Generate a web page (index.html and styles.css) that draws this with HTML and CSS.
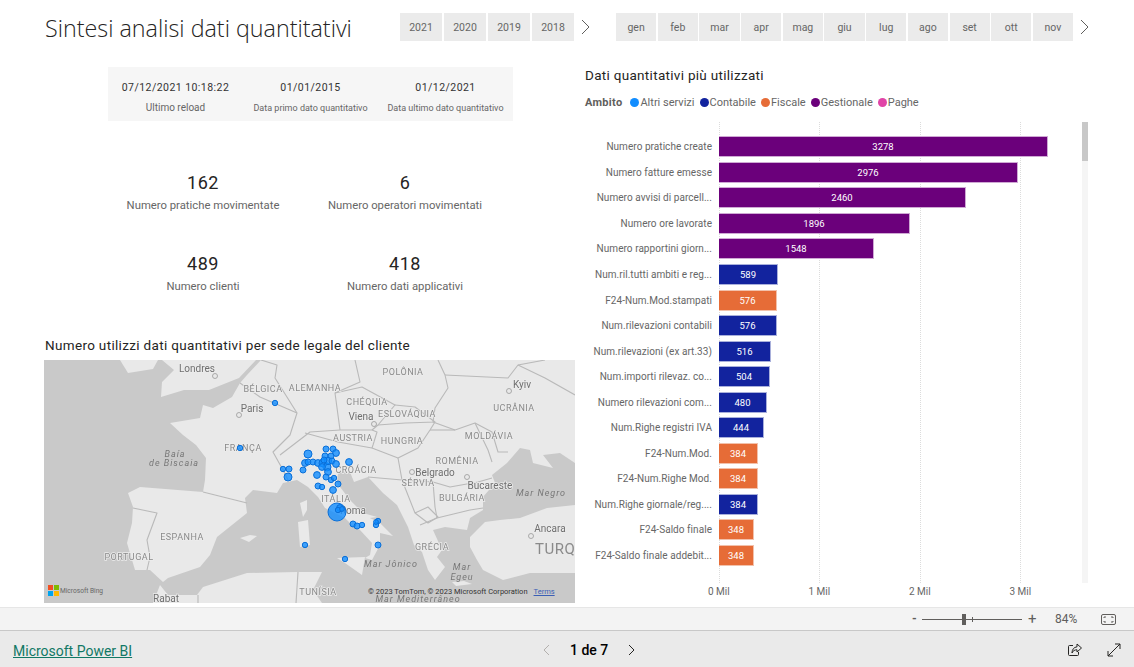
FILE: index.html
```html
<!DOCTYPE html>
<html lang="it">
<head>
<meta charset="utf-8">
<title>Sintesi analisi dati quantitativi</title>
<link rel="stylesheet" href="styles.css">
</head>
<body>
<main class="report">
  <header class="top">
    <h1 class="title">Sintesi analisi dati quantitativi</h1>
    <div class="slicer years">
      <span class="tile">2021</span><span class="tile">2020</span><span class="tile">2019</span><span class="tile">2018</span>
      <svg class="chev" width="9" height="16" viewBox="0 0 9 16"><path d="M1 1l7 7-7 7" /></svg>
    </div>
    <div class="slicer months">
      <span class="tile">gen</span><span class="tile">feb</span><span class="tile">mar</span><span class="tile">apr</span><span class="tile">mag</span><span class="tile">giu</span><span class="tile">lug</span><span class="tile">ago</span><span class="tile">set</span><span class="tile">ott</span><span class="tile">nov</span>
      <svg class="chev" width="9" height="16" viewBox="0 0 9 16"><path d="M1 1l7 7-7 7" /></svg>
    </div>
  </header>
  <div class="body">
    <section class="left">
      <div class="info">
        <div class="info-item"><b>07/12/2021 10:18:22</b><span class="info-big">Ultimo reload</span></div>
        <div class="info-item"><b>01/01/2015</b><span>Data primo dato quantitativo</span></div>
        <div class="info-item"><b>01/12/2021</b><span>Data ultimo dato quantitativo</span></div>
      </div>
      <div class="kpis">
        <div class="kpi"><b>162</b><span>Numero pratiche movimentate</span></div>
        <div class="kpi"><b>6</b><span>Numero operatori movimentati</span></div>
        <div class="kpi"><b>489</b><span>Numero clienti</span></div>
        <div class="kpi"><b>418</b><span>Numero dati applicativi</span></div>
      </div>
      <h2 class="map-title">Numero utilizzi dati quantitativi per sede legale del cliente</h2>
      <div class="map">
        <svg class="map-svg" width="531" height="243" viewBox="0 0 531 243">
          <rect class="sea" width="531" height="243"/>
          <g class="land">
            <path d="M217 0L203 15 196 23 188 37 169 48 159 45 156 58 126 63 139 75 152 85 162 98 161 120 159 132 96 127 84 133 89 147 88 163 83 183 91 210 106 210 119 222 124 218 156 207 166 195 173 177 203 153 201 138 209 130 233 133 239 123 253 120 264 127 274 137 281 148 301 158 308 165 316 170 328 183 326 195 321 198 328 200 336 185 336 173 349 176 336 163 326 158 333 157 319 153 306 140 293 123 294 113 306 112 310 122 324 117 339 133 353 145 364 167 370 185 378 192 384 210 391 220 401 207 393 197 398 190 389 170 401 167 423 170 426 158 439 150 439 137 451 123 448 115 463 103 476 88 486 90 489 103 509 108 499 95 516 93 531 103 531 0Z"/>
            <path d="M531 145L503 148 476 158 456 160 441 162 433 170 426 177 426 187 433 200 439 210 459 220 486 213 509 213 531 213Z"/>
            <path d="M109 243L116 225 124 235 153 235 159 227 203 213 253 212 278 212 269 230 278 243Z"/>
            <path d="M76 0L84 13 109 9 114 0Z"/>
            <path d="M118 0L130 10 118 22 117 37 140 30 165 30 195 18 212 0Z"/>
            <path d="M256 143L263 140 263 150 259 157Z"/>
            <path d="M254 162L264 160 266 185 256 187Z"/>
            <path d="M293 198L321 197 318 215 301 203Z"/>
            <path d="M196 178L206 175 213 176 205 182Z"/>
            <path d="M408 222L420 221 428 224 412 226Z"/>
          </g>
          <g class="borders">
            <path d="M217 0L233 5 231 18 253 53 246 75 229 92 239 110 244 120"/>
            <path d="M196 23L216 37 253 53"/>
            <path d="M236 95L266 72 296 70 328 70 333 72 329 85 328 88 294 82 261 73"/>
            <path d="M311 0L316 22 291 33 296 70"/>
            <path d="M291 33L318 27 351 45 334 65 328 70"/>
            <path d="M351 45L371 47 391 62 361 63 334 65"/>
            <path d="M394 0L401 15 404 28 391 48 389 62 411 70 431 63 448 72 454 92 464 92"/>
            <path d="M401 15L464 18 474 5 501 0"/>
            <path d="M474 5L501 18 531 35"/>
            <path d="M391 62L386 70 374 88 354 98 328 88"/>
            <path d="M354 98L358 120 389 122 406 127 434 122 448 118"/>
            <path d="M386 70L411 70"/>
            <path d="M431 63L444 90 448 102"/>
            <path d="M389 122L391 147 393 158 426 150 439 148"/>
            <path d="M358 120L324 117"/>
            <path d="M358 120L371 153 384 147 394 157 384 163 371 153"/>
            <path d="M376 165L393 158"/>
            <path d="M159 132L203 143"/>
            <path d="M89 148L113 153 103 180 106 197 103 210"/>
            <path d="M154 235L154 243"/>
            <path d="M254 212L252 243"/>
          </g>
          <g class="cities">
            <circle cx="171" cy="16" r="2.5"/><circle cx="195" cy="55" r="2.5"/><circle cx="330" cy="64" r="2.5"/><circle cx="465" cy="31" r="2.5"/><circle cx="368" cy="112" r="2.5"/><circle cx="423" cy="117" r="2.5"/><circle cx="487" cy="176" r="2.5"/>
          </g>
          <g class="labels">
            <text x="153" y="12">Londres</text>
            <text x="208" y="52">Paris</text>
            <text x="317" y="60">Viena</text>
            <text x="478" y="28">Kyiv</text>
            <text x="391" y="116">Belgrado</text>
            <text x="309" y="154">Roma</text>
            <text x="446" y="129">Bucareste</text>
            <text x="506" y="172">Ancara</text>
            <text x="122" y="242">Rabat</text>
          </g>
          <g class="labels country">
            <text x="219" y="32">BÉLGICA</text>
            <text x="271" y="31">ALEMANHA</text>
            <text x="199" y="91">FRANÇA</text>
            <text x="359" y="15">POLÔNIA</text>
            <text x="470" y="51">UCRÂNIA</text>
            <text x="323" y="45">CHÉQUIA</text>
            <text x="363" y="57">ESLOVÁQUIA</text>
            <text x="309" y="81">AUSTRIA</text>
            <text x="358" y="84">HUNGRIA</text>
            <text x="445" y="79">MOLDÁVIA</text>
            <text x="413" y="104">ROMÊNIA</text>
            <text x="312" y="113">CROÁCIA</text>
            <text x="292" y="142">ITÁLIA</text>
            <text x="374" y="126">SÉRVIA</text>
            <text x="418" y="141">BULGÁRIA</text>
            <text x="388" y="190">GRÉCIA</text>
            <text x="274" y="235">TUNÍSIA</text>
            <text x="138" y="180">ESPANHA</text>
            <text x="85" y="200">PORTUGAL</text>
          </g>
          <text class="turkey" x="491" y="194">TURQUIA</text>
          <g class="labels water">
            <text x="131" y="97">Baía</text>
            <text x="130" y="106">de Biscaia</text>
            <text x="497" y="136">Mar Negro</text>
            <text x="347" y="207">Mar Jônico</text>
            <text x="418" y="210">Mar</text>
            <text x="418" y="220">Egeu</text>
            <text x="374" y="242">Mar Mediterrâneo</text>
          </g>
          <g class="dots">
            <circle cx="231" cy="43" r="2.7"/><circle cx="196" cy="88" r="2.7"/>
            <circle cx="239" cy="109" r="2.7"/><circle cx="245" cy="109" r="3"/><circle cx="244" cy="117" r="4"/><circle cx="259" cy="110" r="3"/><circle cx="264" cy="94" r="4"/><circle cx="261" cy="103" r="3.4"/><circle cx="264" cy="102" r="3"/><circle cx="269" cy="102" r="3"/><circle cx="274" cy="103" r="3.4"/><circle cx="279" cy="103" r="4"/><circle cx="283" cy="107" r="4"/><circle cx="278" cy="107" r="3.4"/><circle cx="281" cy="96" r="3"/><circle cx="282" cy="89" r="3"/><circle cx="289" cy="89" r="3"/><circle cx="292" cy="93" r="3.4"/><circle cx="287" cy="96" r="3"/><circle cx="284" cy="101" r="3.7"/><circle cx="288" cy="101" r="3"/><circle cx="280" cy="100" r="3"/><circle cx="292" cy="104" r="3.4"/><circle cx="305" cy="102" r="3.4"/><circle cx="284" cy="112" r="3.4"/><circle cx="273" cy="115" r="3.4"/><circle cx="282" cy="117" r="3"/><circle cx="287" cy="120" r="2.7"/><circle cx="290" cy="118" r="2.7"/><circle cx="294" cy="124" r="3"/><circle cx="274" cy="126" r="3"/><circle cx="278" cy="127" r="2.7"/><circle cx="289" cy="130" r="3.4"/>
            <circle cx="293" cy="152" r="9"/><circle cx="296" cy="148" r="3.4"/><circle cx="294" cy="150" r="2.7"/><circle cx="298" cy="149" r="2.4"/>
            <circle cx="309" cy="164" r="3"/><circle cx="313" cy="166" r="3"/><circle cx="318" cy="165" r="2.7"/><circle cx="334" cy="161" r="2.7"/><circle cx="332" cy="165" r="2.7"/><circle cx="332" cy="162" r="2.4"/><circle cx="334" cy="185" r="3"/><circle cx="301" cy="199" r="2.7"/><circle cx="261" cy="185" r="2.7"/>
          </g>
        </svg>
        <div class="bing">
          <svg class="bing-logo" width="11" height="11" viewBox="0 0 11 11"><rect class="ms-r" width="5" height="5"/><rect class="ms-g" x="6" width="5" height="5"/><rect class="ms-b" y="6" width="5" height="5"/><rect class="ms-y" x="6" y="6" width="5" height="5"/></svg>
          <span>Microsoft Bing</span>
        </div>
        <div class="attrib"><span>© 2023 TomTom, © 2023 Microsoft Corporation</span><a href="#">Terms</a></div>
      </div>
    </section>
    <section class="right">
      <h2 class="chart-title">Dati quantitativi più utilizzati</h2>
      <div class="legend">
        <b>Ambito</b>
        <span class="lg"><i class="dot c-altri"></i>Altri servizi</span>
        <span class="lg"><i class="dot c-cont"></i>Contabile</span>
        <span class="lg"><i class="dot c-fisc"></i>Fiscale</span>
        <span class="lg"><i class="dot c-gest"></i>Gestionale</span>
        <span class="lg"><i class="dot c-paghe"></i>Paghe</span>
      </div>
      <div class="chart">
        <i class="grid g0"></i><i class="grid g1"></i><i class="grid g2"></i><i class="grid g3"></i>
        <i class="scroll-track"></i><i class="scroll-thumb"></i>
        <div class="row"><span class="lab">Numero pratiche create</span><span class="bar c-gest" style="width:329px">3278</span></div>
        <div class="row"><span class="lab">Numero fatture emesse</span><span class="bar c-gest" style="width:299px">2976</span></div>
        <div class="row"><span class="lab">Numero avvisi di parcell...</span><span class="bar c-gest" style="width:247px">2460</span></div>
        <div class="row"><span class="lab">Numero ore lavorate</span><span class="bar c-gest" style="width:191px">1896</span></div>
        <div class="row"><span class="lab">Numero rapportini giorn...</span><span class="bar c-gest" style="width:155px">1548</span></div>
        <div class="row"><span class="lab">Num.ril.tutti ambiti e reg...</span><span class="bar c-cont" style="width:59px">589</span></div>
        <div class="row"><span class="lab">F24-Num.Mod.stampati</span><span class="bar c-fisc" style="width:58px">576</span></div>
        <div class="row"><span class="lab">Num.rilevazioni contabili</span><span class="bar c-cont" style="width:58px">576</span></div>
        <div class="row"><span class="lab">Num.rilevazioni (ex art.33)</span><span class="bar c-cont" style="width:52px">516</span></div>
        <div class="row"><span class="lab">Num.importi rilevaz. co...</span><span class="bar c-cont" style="width:51px">504</span></div>
        <div class="row"><span class="lab">Numero rilevazioni com...</span><span class="bar c-cont" style="width:48px">480</span></div>
        <div class="row"><span class="lab">Num.Righe registri IVA</span><span class="bar c-cont" style="width:45px">444</span></div>
        <div class="row"><span class="lab">F24-Num.Mod.</span><span class="bar c-fisc" style="width:39px">384</span></div>
        <div class="row"><span class="lab">F24-Num.Righe Mod.</span><span class="bar c-fisc" style="width:39px">384</span></div>
        <div class="row"><span class="lab">Num.Righe giornale/reg....</span><span class="bar c-cont" style="width:39px">384</span></div>
        <div class="row"><span class="lab">F24-Saldo finale</span><span class="bar c-fisc" style="width:35px">348</span></div>
        <div class="row"><span class="lab">F24-Saldo finale addebit...</span><span class="bar c-fisc" style="width:35px">348</span></div>
      </div>
      <div class="axis"><span>0 Mil</span><span>1 Mil</span><span>2 Mil</span><span>3 Mil</span></div>
    </section>
  </div>
</main>
<div class="zoombar">
  <span class="z-sign">-</span>
  <div class="slider"><i class="thumb"></i><i class="tick"></i></div>
  <span class="z-plus">+</span>
  <span class="z-pct">84%</span>
  <svg class="fit" width="15" height="11" viewBox="0 0 15 11"><rect x=".5" y=".5" width="14" height="10" rx="1.5"/><path d="M3 4V3h2M10 3h2v1M12 7v1h-2M5 8H3V7"/></svg>
</div>
<footer class="footer">
  <a class="brand" href="#">Microsoft Power BI</a>
  <nav class="pager">
    <svg class="pg off" width="8" height="12" viewBox="0 0 8 12"><path d="M7 1L2 6l5 5"/></svg>
    <span class="pg-text">1 de 7</span>
    <svg class="pg" width="8" height="12" viewBox="0 0 8 12"><path d="M1 1l5 5-5 5"/></svg>
  </nav>
  <div class="actions">
    <svg class="act" width="14" height="14" viewBox="0 0 14 14"><path d="M5 2.500H1.500a1 1 0 0 0-1 1v8a1 1 0 0 0 1 1h8a1 1 0 0 0 1-1V9"/><path d="M9 1l4.500 4L9 9V6.800C6.500 6.800 5 7.800 4 10c0-3.500 1.800-5.800 5-6.200z"/></svg>
    <svg class="act" width="14" height="14" viewBox="0 0 14 14"><path d="M1 13L13 1M8 1h5v5M1 8v5h5"/></svg>
  </div>
</footer>
</body>
</html>
```

FILE: styles.css
```css
* { box-sizing: border-box; }
html, body { margin: 0; padding: 0; }
body {
  width: 1134px;
  height: 667px;
  overflow: hidden;
  display: flex;
  flex-direction: column;
  background: #fff;
  font-family: Roboto, "Liberation Sans", sans-serif;
  color: #252423;
}

.report { height: 607px; flex: none; }

.top { display: flex; height: 41px; padding-top: 13px; }
.title {
  width: 355px;
  margin: 0 0 0 45px;
  height: 28px;
  font: 300 23.300px/30px "Open Sans", sans-serif;
  color: #252423;
  white-space: nowrap;
}
.slicer { display: flex; gap: 2px; align-items: center; height: 28px; }
.years { width: 216px; }
.tile {
  display: flex;
  align-items: center;
  justify-content: center;
  height: 28px;
  width: 42px;
  background: #ebebeb;
  color: #666;
  font-size: 10.500px;
}
.months .tile { width: 40.200px; }
.months { gap: 1.500px; }
.chev { margin-left: 5px; fill: none; stroke: #605e5c; stroke-width: 1; }

.body { display: grid; grid-template-columns: 575px 1fr; }

.left { display: flex; flex-direction: column; padding-top: 26px; }
.info {
  display: grid;
  grid-template-columns: repeat(3, 135px);
  width: 405px;
  height: 54px;
  margin-left: 108px;
  background: #f6f6f6;
}
.info-item { display: flex; flex-direction: column; align-items: center; padding-top: 14px; }
.info-item b { font-weight: 400; font-size: 10.500px; line-height: 14px; letter-spacing: .45px; color: #333; white-space: nowrap; }
.info-item span { font-size: 9px; line-height: 12px; margin-top: 7px; color: #666; white-space: nowrap; }
.info-item .info-big { font-size: 10px; }

.kpis {
  display: grid;
  grid-template-columns: 202px 202px;
  row-gap: 38px;
  margin: 50px 0 0 102px;
}
.kpi { display: flex; flex-direction: column; align-items: center; height: 43px; }
.kpi b { font-weight: 400; font-size: 18px; line-height: 24px; letter-spacing: .6px; color: #252423; }
.kpi span { font-size: 11.300px; line-height: 16px; margin-top: 3px; color: #666; white-space: nowrap; }

.map-title {
  margin: 41px 0 6px 45px;
  font-weight: 400;
  font-size: 13.500px;
  line-height: 18px;
  letter-spacing: .33px;
  color: #252423;
}
.map { position: relative; width: 531px; height: 243px; margin-left: 44px; overflow: hidden; }
.map-svg { display: block; filter: blur(.35px); }
.sea { fill: #c9c9c9; }
.land { fill: #e9e9e9; }
.borders { fill: none; stroke: #b9b9b9; stroke-width: 1.100; stroke-linejoin: round; }
.cities { fill: none; stroke: #999; stroke-width: .8; }
.labels text {
  text-anchor: middle;
  font-size: 10px;
  fill: #6f6f6f;
  paint-order: stroke;
  stroke: #ececec;
  stroke-width: 1.500px;
}
.labels.country text { fill: #8a8a8a; letter-spacing: .5px; font-size: 9px; }
.labels.water text { font-style: italic; font-size: 9px; fill: #777; stroke: none; letter-spacing: 1px; }
.turkey { font-size: 15px; fill: #8a8a8a; letter-spacing: .5px; }
.dots { fill: #118dff; fill-opacity: .8; stroke: #0a6fd8; stroke-width: 1; }

.bing { position: absolute; left: 4px; bottom: 7px; display: flex; align-items: center; gap: 1px; font-size: 6.600px; color: #666; }
.bing-logo { display: block; }
.ms-r { fill: #f25022; }
.ms-g { fill: #7fba00; }
.ms-b { fill: #00a4ef; }
.ms-y { fill: #ffb900; }
.attrib { position: absolute; left: 324px; bottom: 6px; display: flex; gap: 6px; font-size: 7.500px; line-height: 10px; color: #333; white-space: nowrap; }
.attrib a { color: #3b5fb5; }

.right { position: relative; padding: 25px 0 0 10px; }
.chart-title { margin: 0; font-weight: 400; font-size: 13.500px; line-height: 18px; letter-spacing: .3px; color: #252423; }
.legend { display: flex; align-items: center; height: 16px; margin-top: 10px; font-size: 11px; color: #666; }
.legend b { font-weight: 700; margin-right: 8px; letter-spacing: .3px; color: #605e5c; }
.lg { display: flex; align-items: center; margin-right: 5px; white-space: nowrap; }
.dot { width: 9px; height: 9px; border-radius: 50%; margin-right: 1px; }
.c-altri { background: #118dff; }
.c-cont { background: #12239e; }
.c-fisc { background: #e66c37; }
.c-gest { background: #6b007b; }
.c-paghe { background: #e044a7; }

.chart { position: relative; padding-top: 12px; height: 461px; margin-top: 12px; }
.row { position: relative; display: flex; align-items: center; height: 25.560px; }
.lab { width: 127px; margin-right: 6px; text-align: right; font-size: 10px; letter-spacing: .05px; color: #666; white-space: nowrap; }
.bar {
  display: flex;
  align-items: center;
  justify-content: center;
  height: 21px;
  margin-left: 1px;
  color: #fff;
  font-size: 9.500px;
}
.bar.c-gest { border: 1px solid #cfa9d4; border-left: 0; }
.bar.c-cont { border: 1px solid #a9b0db; border-left: 0; }
.bar.c-fisc { border: 1px solid #f2c1ab; border-left: 0; }
.grid { position: absolute; top: 0; bottom: 0; border-left: 1px dotted #dcdcdc; }
.g0 { left: 134px; }
.g1 { left: 234px; }
.g2 { left: 335px; }
.g3 { left: 435px; }
.scroll-track { position: absolute; left: 497px; top: 0; width: 6px; height: 461px; background: #f5f5f5; }
.scroll-thumb { position: absolute; left: 497px; top: 0; width: 6px; height: 39px; background: #c8c8c8; }
.axis { display: flex; margin: 2px 0 0 83.500px; font-size: 10px; color: #666; }
.axis span { width: 100.500px; text-align: center; line-height: 14px; }

.zoombar {
  flex: none;
  height: 24px;
  display: flex;
  align-items: center;
  background: #f3f3f3;
  border-top: 1px solid #e6e6e6;
  border-bottom: 1px solid #c8c8c8;
  padding-left: 912px;
  font-size: 12px;
  color: #605e5c;
}
.z-sign { width: 10px; font-weight: 700; }
.slider { position: relative; width: 100px; height: 1px; background: #605e5c; }
.thumb { position: absolute; left: 40px; top: -5px; width: 4px; height: 11px; background: #605e5c; }
.tick { position: absolute; left: 50px; top: -2px; width: 1px; height: 5px; background: #605e5c; }
.z-plus { margin-left: 6px; width: 27px; font-size: 15px; }
.z-pct { width: 46px; font-size: 12px; }
.fit { fill: none; stroke: #605e5c; stroke-width: 1; }

.footer {
  flex: 1;
  display: grid;
  grid-template-columns: 529px auto 1fr;
  align-items: center;
  background: #eaeaea;
  padding: 2px 13px 0;
}
.brand { font-size: 14px; margin-top: 2px; color: #117865; text-decoration: underline; }
.pager { display: flex; align-items: center; gap: 20px; }
.pg { fill: none; stroke: #252423; stroke-width: 1; }
.pg.off { stroke: #b3b0ad; }
.pg-text { font-size: 14px; font-weight: 500; color: #000; }
.actions { display: flex; justify-content: flex-end; gap: 25px; }
.act { fill: none; stroke: #252423; stroke-width: 1; }
```
